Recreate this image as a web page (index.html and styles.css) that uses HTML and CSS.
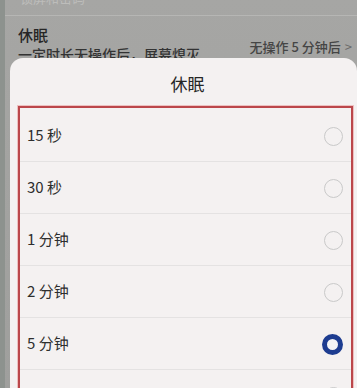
FILE: index.html
```html
<!DOCTYPE html>
<html lang="zh">
<head>
<meta charset="utf-8">
<link rel="stylesheet" href="styles.css">
</head>
<body>
<div class="screen">
  <div class="prev"><span>锁屏和密码</span></div>
  <div class="setting">
    <div class="setting-text">
      <div class="setting-title">休眠</div>
      <div class="setting-sub">一定时长无操作后，屏幕熄灭</div>
    </div>
    <div class="setting-value">无操作 5 分钟后 <span class="chev">&gt;</span></div>
  </div>
  <div class="sheet">
    <div class="sheet-title">休眠</div>
    <div class="options">
      <div class="option"><span class="label">15 秒</span><span class="radio"></span></div>
      <div class="option"><span class="label">30 秒</span><span class="radio"></span></div>
      <div class="option"><span class="label">1 分钟</span><span class="radio"></span></div>
      <div class="option"><span class="label">2 分钟</span><span class="radio"></span></div>
      <div class="option"><span class="label">5 分钟</span><span class="radio checked"></span></div>
      <div class="option"><span class="label">10 分钟</span><span class="radio"></span></div>
    </div>
  </div>
</div>
</body>
</html>
```
FILE: styles.css
```css
html, body {
  margin: 0;
  padding: 0;
  width: 357px;
  height: 388px;
  overflow: hidden;
}
body {
  font-family: "Noto Sans CJK SC", "Noto Sans", sans-serif;
  background: #a3a3a1;
}
.screen {
  height: 388px;
  border-left: 5px solid #8d928e;
  background: linear-gradient(#a6a6a4, #9f9f9d);
  overflow: hidden;
}
.prev {
  height: 15px;
  overflow: hidden;
  border-bottom: 1px solid rgba(255,255,255,0.18);
  padding-left: 15px;
}
.prev span {
  display: block;
  margin-top: -10px;
  font-size: 13px;
  line-height: 15px;
  color: #bdbdbb;
}
.setting {
  height: 42px;
  overflow: hidden;
  display: flex;
  justify-content: space-between;
  padding-left: 13px;
  padding-right: 5px;
}
.setting-text {
  padding-top: 8px;
}
.setting-title {
  font-size: 15px;
  font-weight: 500;
  line-height: 22px;
  color: #262626;
}
.setting-sub {
  font-size: 14px;
  font-weight: 500;
  line-height: 16px;
  color: #333;
}
.setting-value {
  margin-top: 22px;
  font-size: 13px;
  font-weight: 500;
  line-height: 17px;
  color: #454545;
  white-space: nowrap;
}
.chev {
  color: #6a6a6a;
  font-weight: 400;
  margin-left: 1px;
}
.sheet {
  margin-left: 5px;
  background: #f4f1f1;
  border-radius: 13px 13px 0 0;
  height: 340px;
}
.sheet-title {
  height: 48px;
  line-height: 52px;
  text-align: center;
  font-size: 17px;
  color: #262626;
  padding-left: 8px;
}
.options {
  margin-left: 8px;
  margin-right: 4px;
  border: 2px solid #bb474b;
  box-shadow: 0 0 0 1px rgba(232, 160, 160, 0.6);
  padding-top: 2px;
}
.option {
  height: 51px;
  border-bottom: 1px solid #e4e2e2;
  display: flex;
  align-items: center;
  justify-content: space-between;
  padding-left: 7px;
  padding-right: 8px;
}
.label {
  font-size: 15px;
  color: #2e2e2e;
  margin-top: -2px;
}
.radio {
  width: 17px;
  height: 17px;
  border: 1.5px solid #c9c9c9;
  border-radius: 50%;
  margin-top: 2px;
}
.radio.checked {
  width: 11px;
  height: 11px;
  border: 5px solid #1d3c90;
  background: #f3f3f5;
}
```
